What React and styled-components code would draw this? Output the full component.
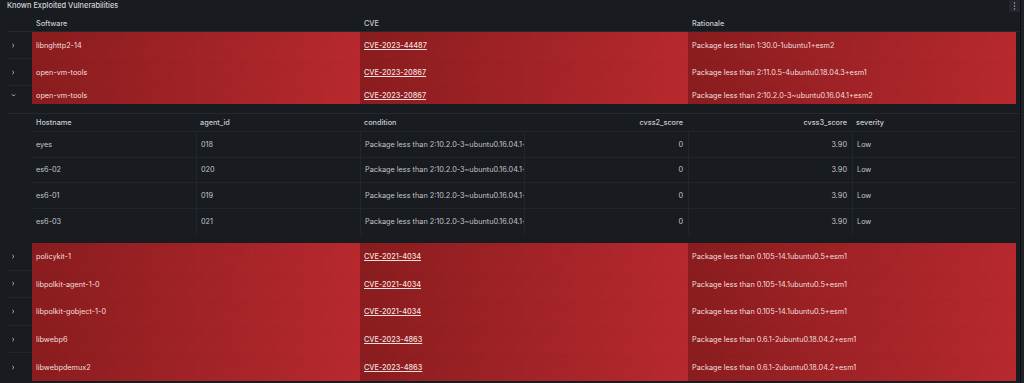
import React from "react";
import styled, { createGlobalStyle } from "styled-components";

const GlobalStyle = createGlobalStyle`
  *, *::before, *::after {
    box-sizing: border-box;
  }
  html, body {
    margin: 0;
    padding: 0;
    background: #111217;
  }
  body {
    font-family: Inter, "Noto Sans", sans-serif;
    font-size: 7.3px;
    color: #ccccdc;
  }
`;

const Panel = styled.div`
  width: 1024px;
  height: 383px;
  display: flex;
  background: #181b1f;
  overflow: hidden;
`;

const Main = styled.div`
  flex: 1;
  display: flex;
  flex-direction: column;
`;

const Scrollbar = styled.div`
  width: 4px;
  border-left: 1px solid #0d0e11;
  background: #1f2126;
`;

const TitleBar = styled.div`
  height: 15px;
  display: flex;
  align-items: flex-start;
  justify-content: space-between;
  padding-left: 7px;
`;

const Title = styled.div`
  font-size: 7.4px;
  font-weight: 500;
  color: #d2d3da;
  line-height: 11px;
`;

const MenuButton = styled.div`
  width: 11px;
  height: 12px;
  background: #23262c;
  display: flex;
  align-items: center;
  justify-content: center;
`;

const Table = styled.div`
  padding-left: 7px;
  display: flex;
  flex-direction: column;
`;

const Row = styled.div`
  display: grid;
  grid-template-columns: 25px 328px 328px 328px;
  height: ${(p) => p.$h}px;
`;

const HeadRow = styled(Row)`
  border-bottom: 1px solid #25272d;
`;

const HeadCell = styled.div`
  display: flex;
  align-items: center;
  padding-left: 4px;
  color: #c7c8d0;
  font-weight: 500;
`;

const Expander = styled.div`
  display: flex;
  align-items: center;
  padding-left: 4px;
  border-bottom: ${(p) => (p.$last ? "none" : "1px solid #23252b")};
  color: #b8b9c2;
`;

const RedCell = styled.div`
  display: flex;
  align-items: center;
  padding-left: 4px;
  background: linear-gradient(120deg, #881c1e, #b8292f);
  color: #f3dede;
  white-space: nowrap;
  overflow: hidden;
`;

const Link = styled.span`
  text-decoration: underline;
  text-underline-offset: 1px;
  font-weight: 500;
`;

const Expanded = styled.div`
  height: 139px;
  display: flex;
  flex-direction: column;
  padding-top: 9px;
`;

const SubTable = styled.div`
  border-top: 1px solid #25272d;
  display: flex;
  flex-direction: column;
`;

const SubRow = styled.div`
  margin-left: 25px;
  width: 984px;
  display: grid;
  grid-template-columns: repeat(6, 164px);
  height: ${(p) => p.$h}px;
  border-bottom: ${(p) => (p.$noBorder ? "none" : "1px solid #23252b")};
`;

const SubHead = styled.div`
  display: flex;
  align-items: center;
  justify-content: ${(p) => (p.$right ? "flex-end" : "flex-start")};
  padding: 0 ${(p) => (p.$right ? "5px" : "0")} 0 4px;
  color: #c7c8d0;
  font-weight: 500;
`;

const SubCell = styled.div`
  display: flex;
  align-items: center;
  justify-content: ${(p) => (p.$right ? "flex-end" : "flex-start")};
  padding: 0 ${(p) => (p.$right ? "5px" : "0")} 0 4px;
  border-left: ${(p) => (p.$first ? "none" : "1px solid #23252b")};
  color: #c2c3cb;
  white-space: nowrap;
  overflow: hidden;
`;

const Chevron = ({ open }) => (
  <svg width="5" height="5" viewBox="0 0 6 6">
    <path
      d={open ? "M1.5 2 L3 3.6 L4.5 2" : "M2 1.5 L3.6 3 L2 4.5"}
      fill="none"
      stroke="#c4c5cc"
      strokeWidth="1.1"
      strokeLinecap="round"
      strokeLinejoin="round"
    />
  </svg>
);

const Dots = () => (
  <svg width="3" height="8" viewBox="0 0 3 8">
    <circle cx="1.5" cy="1" r="0.8" fill="#a8a9b2" />
    <circle cx="1.5" cy="4" r="0.8" fill="#a8a9b2" />
    <circle cx="1.5" cy="7" r="0.8" fill="#a8a9b2" />
  </svg>
);

const topRows = [
  ["libnghttp2-14", "CVE-2023-44487", "Package less than 1:30.0-1ubuntu1+esm2", 27],
  ["open-vm-tools", "CVE-2023-20867", "Package less than 2:11.0.5-4ubuntu0.18.04.3+esm1", 27],
];

const bottomRows = [
  ["policykit-1", "CVE-2021-4034", "Package less than 0.105-14.1ubuntu0.5+esm1"],
  ["libpolkit-agent-1-0", "CVE-2021-4034", "Package less than 0.105-14.1ubuntu0.5+esm1"],
  ["libpolkit-gobject-1-0", "CVE-2021-4034", "Package less than 0.105-14.1ubuntu0.5+esm1"],
  ["libwebp6", "CVE-2023-4863", "Package less than 0.6.1-2ubuntu0.18.04.2+esm1"],
  ["libwebpdemux2", "CVE-2023-4863", "Package less than 0.6.1-2ubuntu0.18.04.2+esm1"],
];

const hosts = [
  ["eyes", "018"],
  ["es6-02", "020"],
  ["es6-01", "019"],
  ["es6-03", "021"],
];

const VulnRow = ({ software, cve, rationale, h, open, last }) => (
  <Row $h={h}>
    <Expander $last={last}>
      <Chevron open={open} />
    </Expander>
    <RedCell>{software}</RedCell>
    <RedCell>
      <Link>{cve}</Link>
    </RedCell>
    <RedCell>{rationale}</RedCell>
  </Row>
);

export default function App() {
  return (
    <>
      <GlobalStyle />
      <Panel>
        <Main>
          <TitleBar>
            <Title>Known Exploited Vulnerabilities</Title>
            <MenuButton>
              <Dots />
            </MenuButton>
          </TitleBar>
          <Table>
            <HeadRow $h={17}>
              <HeadCell />
              <HeadCell>Software</HeadCell>
              <HeadCell>CVE</HeadCell>
              <HeadCell>Rationale</HeadCell>
            </HeadRow>
            {topRows.map(([s, c, r, h]) => (
              <VulnRow key={s + c} software={s} cve={c} rationale={r} h={h} />
            ))}
            <VulnRow
              software="open-vm-tools"
              cve="CVE-2023-20867"
              rationale="Package less than 2:10.2.0-3~ubuntu0.16.04.1+esm2"
              h={18}
              open
              last
            />
            <Expanded>
              <SubTable>
                <SubRow $h={18}>
                  <SubHead>Hostname</SubHead>
                  <SubHead>agent_id</SubHead>
                  <SubHead>condition</SubHead>
                  <SubHead $right>cvss2_score</SubHead>
                  <SubHead $right>cvss3_score</SubHead>
                  <SubHead>severity</SubHead>
                </SubRow>
                {hosts.map(([host, id], i) => (
                  <SubRow key={host} $h={25.5} $noBorder={i === hosts.length - 1}>
                    <SubCell $first>{host}</SubCell>
                    <SubCell>{id}</SubCell>
                    <SubCell>Package less than 2:10.2.0-3~ubuntu0.16.04.1+esm2</SubCell>
                    <SubCell $right>0</SubCell>
                    <SubCell $right>3.90</SubCell>
                    <SubCell>Low</SubCell>
                  </SubRow>
                ))}
              </SubTable>
            </Expanded>
            {bottomRows.map(([s, c, r], i) => (
              <VulnRow
                key={s}
                software={s}
                cve={c}
                rationale={r}
                h={27.6}
                last={i === bottomRows.length - 1}
              />
            ))}
          </Table>
        </Main>
        <Scrollbar />
      </Panel>
    </>
  );
}
